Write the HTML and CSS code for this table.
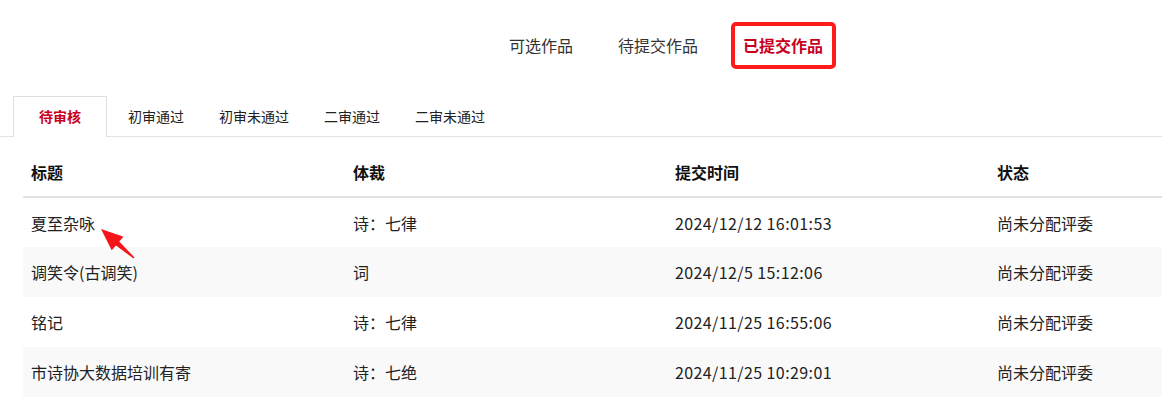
FILE: index.html
```html
<!DOCTYPE html>
<html lang="zh-CN">
<head>
<meta charset="utf-8">
<title>已提交作品</title>
<link rel="stylesheet" href="styles.css">
</head>
<body>
<div class="page">
  <nav class="topnav">
    <a class="nav-item">可选作品</a>
    <a class="nav-item">待提交作品</a>
    <a class="nav-item active">已提交作品</a>
  </nav>
  <div class="tabs">
    <div class="tab active">待审核</div>
    <div class="tab">初审通过</div>
    <div class="tab">初审未通过</div>
    <div class="tab">二审通过</div>
    <div class="tab">二审未通过</div>
  </div>
  <div class="table-wrap">
    <table class="works">
      <thead>
        <tr><th>标题</th><th>体裁</th><th>提交时间</th><th>状态</th></tr>
      </thead>
      <tbody>
        <tr><td>夏至杂咏</td><td>诗：七律</td><td class="num">2024/12/12 16:01:53</td><td>尚未分配评委</td></tr>
        <tr><td>调笑令(古调笑)</td><td>词</td><td class="num">2024/12/5 15:12:06</td><td>尚未分配评委</td></tr>
        <tr><td>铭记</td><td>诗：七律</td><td class="num">2024/11/25 16:55:06</td><td>尚未分配评委</td></tr>
        <tr><td>市诗协大数据培训有寄</td><td>诗：七绝</td><td class="num">2024/11/25 10:29:01</td><td>尚未分配评委</td></tr>
      </tbody>
    </table>
  </div>
  <svg class="arrow" width="45" height="40" viewBox="0 0 45 40">
    <polygon points="6,7 28.5,14.7 24.2,19.6 39.5,35.5 38.5,36.5 21,23.4 16.7,28.3" fill="#f5141a"/>
  </svg>
</div>
</body>
</html>
```
FILE: styles.css
```css
html, body {
  margin: 0;
  padding: 0;
  background: #fff;
  overflow: hidden;
}
body {
  font-family: "Noto Sans CJK SC", "Noto Sans", sans-serif;
  color: #222;
}
.page {
  position: relative;
  width: 1162px;
  height: 397px;
  overflow: hidden;
}
.topnav {
  display: flex;
  gap: 21px;
  padding: 22px 0 27px 497px;
}
.nav-item {
  display: block;
  font-size: 16px;
  line-height: 21px;
  padding: 9px 8px 9px 8px;
  border: 4px solid transparent;
  border-radius: 5px;
  color: #333;
}
.nav-item.active {
  color: #c8001e;
  font-weight: bold;
  border-color: #ff1a1a;
  padding-right: 9px;
}
.tabs {
  display: flex;
  align-items: flex-end;
  padding-left: 13px;
  height: 40px;
  border-bottom: 1px solid #e4e4e4;
}
.tab {
  height: 40px;
  line-height: 40px;
  font-size: 14px;
  color: #222;
  padding: 0 14px;
  margin-right: 7px;
  box-sizing: border-box;
}
.tab.active {
  color: #c8001e;
  font-weight: bold;
  padding: 0 25px;
  margin-right: 7px;
  border: 1px solid #e0e0e0;
  border-bottom: none;
  background: #fff;
  height: 41px;
  margin-bottom: -1px;
  line-height: 39px;
}
.table-wrap {
  padding: 10px 0 0 23px;
}
.works {
  width: 1288px;
  border-collapse: collapse;
  table-layout: fixed;
}
.works th, .works td {
  text-align: left;
  padding: 0 8px;
  font-size: 16px;
  height: 50px;
  box-sizing: border-box;
}
.works th {
  font-weight: bold;
  color: #111;
  border-bottom: 2px solid #e2e2e2;
}
.works td {
  color: #222;
}
.works td.num {
  letter-spacing: 0.4px;
}
.works tbody tr:nth-child(even) {
  background: #f9f9f9;
}
.arrow {
  position: absolute;
  left: 95px;
  top: 222px;
}
```
